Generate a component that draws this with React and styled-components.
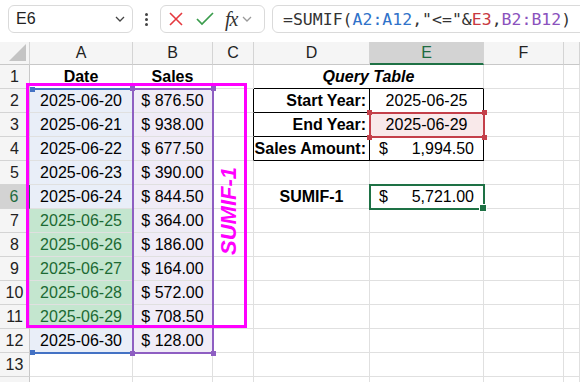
import React from 'react';
import styled, {createGlobalStyle} from 'styled-components';

const GlobalStyle = createGlobalStyle`
  body {
    margin: 0;
    background: #fff;
    font-family: 'Liberation Sans', Arial, sans-serif;
  }
`;

const COLS = ['A', 'B', 'C', 'D', 'E', 'F', ''];

const data = [
  ['2025-06-20', '876.50'],
  ['2025-06-21', '938.00'],
  ['2025-06-22', '677.50'],
  ['2025-06-23', '390.00'],
  ['2025-06-24', '844.50'],
  ['2025-06-25', '364.00'],
  ['2025-06-26', '186.00'],
  ['2025-06-27', '164.00'],
  ['2025-06-28', '572.00'],
  ['2025-06-29', '708.50'],
  ['2025-06-30', '128.00'],
];

const query = {
  2: ['Start Year:', '2025-06-25'],
  3: ['End Year:', '2025-06-29'],
  4: ['Sales Amount:', '1,994.50'],
};

const Chevron = ({color = '#444', size = 12}) => (
  <svg width={size} height={size} viewBox="0 0 12 12">
    <polyline points="2,4 6,8 10,4" fill="none" stroke={color} strokeWidth="1.3" />
  </svg>
);

const App = () => {
  const rows = [];
  for (let r = 1; r <= 14; r++) {
    const d = data[r - 2];
    const green = r >= 7 && r <= 11;
    const inTable = r >= 2 && r <= 4;
    // row 14 is only a sliver at the bottom edge, its number is out of view
    rows.push(
      <RowHeader key={`h${r}`} $active={r === 6}>
        {r < 14 ? r : ''}
      </RowHeader>
    );
    if (r === 1) {
      rows.push(<Cell key={`a${r}`} $bold>Date</Cell>);
      rows.push(<Cell key={`b${r}`} $bold>Sales</Cell>);
    } else if (d) {
      rows.push(
        <Cell
          key={`a${r}`}
          $bg={green ? '#c4e6cf' : '#e9eef8'}
          $color={green ? '#1c6a33' : '#000'}
        >
          {d[0]}
        </Cell>
      );
      rows.push(
        <Cell key={`b${r}`} $bg="#f0ecf7">
          $ {d[1]}
        </Cell>
      );
    } else {
      rows.push(<Cell key={`a${r}`} />);
      rows.push(<Cell key={`b${r}`} />);
    }
    rows.push(<Cell key={`c${r}`} $rc={inTable ? '#000' : undefined} />);
    if (r === 1) {
      rows.push(
        <Cell key={`d${r}`} $span={2} $bold $italic $bc="#000">
          Query Table
        </Cell>
      );
    } else if (inTable) {
      const [label, value] = query[r];
      rows.push(
        <Cell key={`d${r}`} $bold $align="flex-end" $pad={3} $rc="#000" $bc="#000">
          {label}
        </Cell>
      );
      rows.push(
        r === 4 ? (
          <Cell key={`e${r}`} $align="space-between" $pad={9} $rc="#000" $bc="#000">
            <span>$</span>
            <span>{value}</span>
          </Cell>
        ) : (
          <Cell key={`e${r}`} $rc="#000" $bc="#000" $bg={r === 3 ? '#f9e9ea' : '#fff'}>
            {value}
          </Cell>
        )
      );
    } else if (r === 6) {
      rows.push(
        <Cell key={`d${r}`} $bold>
          SUMIF-1
        </Cell>
      );
      rows.push(
        <Cell key={`e${r}`} $align="space-between" $pad={9}>
          <span>$</span>
          <span>5,721.00</span>
        </Cell>
      );
    } else {
      rows.push(<Cell key={`d${r}`} />);
      rows.push(<Cell key={`e${r}`} />);
    }
    rows.push(<Cell key={`f${r}`} />);
    rows.push(<Cell key={`g${r}`} />);
  }

  return (
    <>
      <GlobalStyle />
      <Toolbar>
        <NameBox>
          <span>E6</span>
          <Chevron />
        </NameBox>
        <Dots>
          <i />
          <i />
          <i />
        </Dots>
        <FxGroup>
          <svg width="16" height="16" viewBox="0 0 16 16">
            <path d="M2 2 L14 14 M14 2 L2 14" stroke="#e5393f" strokeWidth="1.6" fill="none" />
          </svg>
          <svg width="20" height="16" viewBox="0 0 20 16">
            <polyline points="2,8 7,13 18,2" stroke="#3a9c4c" strokeWidth="1.7" fill="none" />
          </svg>
          <FxText>fx</FxText>
          <Chevron color="#9a9a9a" />
        </FxGroup>
        <FormulaBox>
          <span>=SUMIF(</span>
          <Ref $c="#2f72c9">A2:A12</Ref>
          <span>,"&lt;="&amp;</span>
          <Ref $c="#c8383f">E3</Ref>
          <span>,</span>
          <Ref $c="#8a52bd">B2:B12</Ref>
          <span>)</span>
        </FormulaBox>
      </Toolbar>
      <Sheet>
        <Corner>
          <svg width="17" height="17" viewBox="0 0 17 17">
            <polygon points="17,0 17,17 0,17" fill="#c4c4c4" />
          </svg>
        </Corner>
        {COLS.map((c) => (
          <ColHeader key={c || 'g'} $active={c === 'E'}>
            {c}
          </ColHeader>
        ))}
        {rows}

        <RangeA>
          <Handle $c="#4472c4" style={{left: -1, top: -3}} />
          <Handle $c="#4472c4" style={{left: -1, bottom: -3}} />
        </RangeA>
        <RangeB>
          <Handle $c="#8e5ec2" style={{left: -4, top: -4}} />
          <Handle $c="#8e5ec2" style={{right: -4, top: -4}} />
          <Handle $c="#8e5ec2" style={{left: -4, bottom: -4}} />
          <Handle $c="#8e5ec2" style={{right: -4, bottom: -4}} />
        </RangeB>
        <RangeE3>
          <Handle $c="#c4404a" style={{left: -4, top: -4}} />
          <Handle $c="#c4404a" style={{right: -4, top: -4}} />
          <Handle $c="#c4404a" style={{left: -4, bottom: -4}} />
          <Handle $c="#c4404a" style={{right: -4, bottom: -4}} />
        </RangeE3>
        <Selection>
          <FillHandle />
        </Selection>
        <Outline />
        <ShapeText>SUMIF-1</ShapeText>
      </Sheet>
    </>
  );
};
export default App;

const Toolbar = styled.div`
  display: flex;
  align-items: center;
  height: 42px;
  padding: 0 0 4px 8px;
  box-sizing: border-box;
  overflow: hidden;
`;

const NameBox = styled.div`
  flex: 0 0 125px;
  height: 28px;
  box-sizing: border-box;
  border: 1px solid #dadada;
  border-radius: 6px;
  display: flex;
  align-items: center;
  justify-content: space-between;
  padding: 0 6px 0 7px;
  font-size: 16px;
  color: #222;
`;

const Dots = styled.div`
  flex: 0 0 27px;
  display: flex;
  flex-direction: column;
  align-items: center;
  gap: 2px;

  & i {
    width: 3px;
    height: 3px;
    background: #444;
    border-radius: 50%;
  }
`;

const FxGroup = styled.div`
  flex: 0 0 105px;
  height: 28px;
  box-sizing: border-box;
  border: 1px solid #dadada;
  border-radius: 6px;
  display: flex;
  align-items: center;
  gap: 11px;
  padding: 0 0 0 7px;

  & svg:last-child {
    margin-left: -7px;
  }
`;

const FxText = styled.span`
  font-family: 'Liberation Serif', serif;
  font-style: italic;
  font-size: 20px;
  color: #333;
  letter-spacing: -1px;
  margin-left: -1px;
`;

const FormulaBox = styled.div`
  flex: 0 0 330px;
  margin-left: 7px;
  height: 28px;
  box-sizing: border-box;
  border: 1px solid #dadada;
  border-radius: 6px;
  display: flex;
  align-items: center;
  padding-left: 10px;
  font-family: 'DejaVu Sans Mono', monospace;
  font-size: 16.5px;
  color: #333;
  white-space: pre;
`;

const Ref = styled.span`
  color: ${(p) => p.$c};
`;

const Sheet = styled.div`
  position: relative;
  display: grid;
  grid-template-columns: 30px 103px 80px 41px 116px 114px 80px 1fr;
  grid-template-rows: 23px repeat(14, 24px);
  height: 340px;
  overflow: hidden;
  font-size: 16px;
`;

const Corner = styled.div`
  background: #f5f5f5;
  border-right: 1px solid #d4d4d4;
  border-bottom: 1px solid #c8c8c8;
  display: flex;
  align-items: flex-end;
  justify-content: flex-end;
  padding: 0 3px 3px 0;
`;

const ColHeader = styled.div`
  display: flex;
  align-items: center;
  justify-content: center;
  background: ${(p) => (p.$active ? '#d3d3d3' : '#f5f5f5')};
  border-right: 1px solid #d4d4d4;
  border-bottom: ${(p) => (p.$active ? '2px solid #1e7145' : '1px solid #c8c8c8')};
  color: ${(p) => (p.$active ? '#1e6b40' : '#222')};
  font-size: 16px;
`;

const RowHeader = styled.div`
  display: flex;
  align-items: center;
  justify-content: center;
  background: ${(p) => (p.$active ? '#d3d3d3' : '#f5f5f5')};
  border-right: ${(p) => (p.$active ? '2px solid #1e7145' : '1px solid #c8c8c8')};
  border-bottom: 1px solid #d4d4d4;
  color: ${(p) => (p.$active ? '#1e6b40' : '#222')};
  font-size: 16px;
`;

const Cell = styled.div`
  display: flex;
  align-items: center;
  justify-content: ${(p) => p.$align || 'center'};
  padding: 0 ${(p) => p.$pad ?? 2}px;
  grid-column: span ${(p) => p.$span || 1};
  border-right: 1px solid ${(p) => p.$rc || '#e0e0e0'};
  border-bottom: 1px solid ${(p) => p.$bc || '#e0e0e0'};
  background: ${(p) => p.$bg || '#fff'};
  color: ${(p) => p.$color || '#000'};
  font-weight: ${(p) => (p.$bold ? 700 : 400)};
  font-style: ${(p) => (p.$italic ? 'italic' : 'normal')};
  white-space: nowrap;
  overflow: hidden;
`;

const Handle = styled.span`
  position: absolute;
  width: 5px;
  height: 5px;
  background: ${(p) => p.$c};
`;

const RangeA = styled.div`
  position: absolute;
  left: 31px;
  top: 46px;
  width: 101px;
  height: 266px;
  box-sizing: border-box;
  border-top: 2px solid #4472c4;
  border-bottom: 2px solid #4472c4;
`;

const RangeB = styled.div`
  position: absolute;
  left: 132px;
  top: 46px;
  width: 82px;
  height: 266px;
  box-sizing: border-box;
  border: 2px solid #8e5ec2;
`;

const RangeE3 = styled.div`
  position: absolute;
  left: 369px;
  top: 70px;
  width: 116px;
  height: 26px;
  box-sizing: border-box;
  border: 2px solid #c4404a;
`;

const Selection = styled.div`
  position: absolute;
  left: 369px;
  top: 142px;
  width: 116px;
  height: 26px;
  box-sizing: border-box;
  border: 2px solid #1e7145;
`;

const FillHandle = styled.span`
  position: absolute;
  right: -4px;
  bottom: -4px;
  width: 6px;
  height: 6px;
  background: #1e7145;
  border: 1px solid #fff;
`;

const Outline = styled.div`
  position: absolute;
  left: 26px;
  top: 41px;
  width: 221px;
  height: 245px;
  box-sizing: border-box;
  border: 3px solid #ff00ff;
  pointer-events: none;
`;

const ShapeText = styled.div`
  position: absolute;
  left: 229px;
  top: 169px;
  transform: translate(-50%, -50%) rotate(-90deg);
  color: #ff00ff;
  font-weight: 700;
  font-style: italic;
  font-size: 22px;
  white-space: nowrap;
`;
